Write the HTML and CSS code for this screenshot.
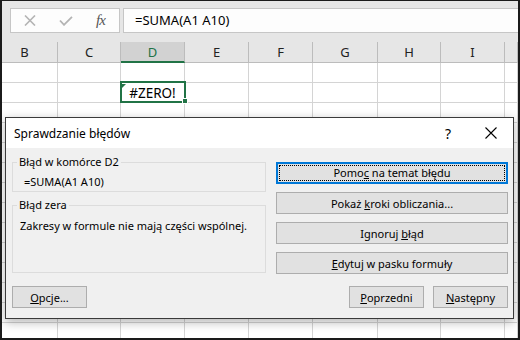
FILE: index.html
```html
<!DOCTYPE html>
<html lang="pl">
<head>
    <meta charset="UTF-8">
    <title>Sprawdzanie błędów</title>
    <link rel="stylesheet" href="styles.css">
</head>
<body>
<div class="app">
    <div class="formula-bar">
        <div class="tools">
            <svg class="ico-cancel" width="12" height="11" viewBox="0 0 12 11"><path d="M1 0.5 L11 10.5 M11 0.5 L1 10.5" stroke="#b4b4b4" stroke-width="1.6" fill="none"/></svg>
            <svg class="ico-enter" width="14" height="10" viewBox="0 0 14 10"><path d="M1 4.5 L5 8.8 L13 0.8" stroke="#b4b4b4" stroke-width="1.8" fill="none"/></svg>
            <span class="fx">fx</span>
        </div>
        <div class="formula-input">=SUMA(A1 A10)</div>
    </div>

    <table class="sheet">
        <colgroup>
            <col style="width:56px"><col style="width:63px"><col style="width:64px"><col style="width:64px">
            <col style="width:64px"><col style="width:65px"><col style="width:63px"><col style="width:64px"><col>
        </colgroup>
        <tr class="head">
            <th class="col-b">B</th><th>C</th><th class="active">D</th><th>E</th><th>F</th><th>G</th><th>H</th><th>I</th><th></th>
        </tr>
        <tr><td></td><td></td><td></td><td></td><td></td><td></td><td></td><td></td><td></td></tr>
        <tr><td></td><td></td><td class="selected"><span class="err-mark"></span>#ZERO!<span class="handle"></span></td><td></td><td></td><td></td><td></td><td></td><td></td></tr>
        <tr><td></td><td></td><td></td><td></td><td></td><td></td><td></td><td></td><td></td></tr>
        <tr><td></td><td></td><td></td><td></td><td></td><td></td><td></td><td></td><td></td></tr>
        <tr><td></td><td></td><td></td><td></td><td></td><td></td><td></td><td></td><td></td></tr>
        <tr><td></td><td></td><td></td><td></td><td></td><td></td><td></td><td></td><td></td></tr>
        <tr><td></td><td></td><td></td><td></td><td></td><td></td><td></td><td></td><td></td></tr>
        <tr><td></td><td></td><td></td><td></td><td></td><td></td><td></td><td></td><td></td></tr>
        <tr><td></td><td></td><td></td><td></td><td></td><td></td><td></td><td></td><td></td></tr>
        <tr><td></td><td></td><td></td><td></td><td></td><td></td><td></td><td></td><td></td></tr>
        <tr><td></td><td></td><td></td><td></td><td></td><td></td><td></td><td></td><td></td></tr>
        <tr><td></td><td></td><td></td><td></td><td></td><td></td><td></td><td></td><td></td></tr>
        <tr><td></td><td></td><td></td><td></td><td></td><td></td><td></td><td></td><td></td></tr>
        <tr><td></td><td></td><td></td><td></td><td></td><td></td><td></td><td></td><td></td></tr>
    </table>

    <div class="dialog">
        <div class="dlg-title">
            <span class="dlg-caption">Sprawdzanie błędów</span>
            <span class="dlg-help">?</span>
            <svg class="dlg-close" width="12" height="12" viewBox="0 0 12 12"><path d="M0.5 0.5 L11.5 11.5 M11.5 0.5 L0.5 11.5" stroke="#000" stroke-width="1.1" fill="none"/></svg>
        </div>
        <div class="dlg-body">
            <div class="dlg-main">
                <div class="dlg-left">
                    <fieldset class="group">
                        <legend>Błąd w komórce D2</legend>
                        <div class="group-formula">=SUMA(A1 A10)</div>
                    </fieldset>
                    <fieldset class="group group-desc">
                        <legend>Błąd zera</legend>
                        <div class="group-text">Zakresy w formule nie mają części wspólnej.</div>
                    </fieldset>
                </div>
                <div class="dlg-actions">
                    <button class="btn btn-wide focused"><span>Pomo<u>c</u> na temat błędu</span></button>
                    <button class="btn btn-wide">Pokaż <u>k</u>roki obliczania...</button>
                    <button class="btn btn-wide">Ignoruj <u>b</u>łąd</button>
                    <button class="btn btn-wide"><u>E</u>dytuj w pasku formuły</button>
                </div>
            </div>
            <div class="dlg-footer">
                <button class="btn"><u>O</u>pcje...</button>
                <div class="nav-btns">
                    <button class="btn"><u>P</u>oprzedni</button>
                    <button class="btn"><u>N</u>astępny</button>
                </div>
            </div>
        </div>
    </div>
</div>
</body>
</html>
```

FILE: styles.css
```css
* {
    box-sizing: border-box;
}

body {
    margin: 0;
    font-family: "Noto Sans", sans-serif;
}

.app {
    position: relative;
    width: 520px;
    height: 340px;
    overflow: hidden;
    background: #fff;
    border: 2px solid #1b1b1b;
    border-top-width: 1px;
}

/* formula bar */
.formula-bar {
    display: flex;
    gap: 3px;
    height: 41px;
    padding: 7px 0 0 8px;
    background: #e6e6e6;
}

.tools {
    display: flex;
    align-items: center;
    width: 110px;
    height: 25px;
    background: #fdfdfd;
    border: 1px solid #c6c6c6;
}

.ico-cancel {
    margin-left: 13px;
}

.ico-enter {
    margin-left: 23px;
}

.fx {
    margin-left: 23px;
    font-family: "Liberation Serif", serif;
    font-style: italic;
    font-size: 15px;
    color: #555;
    letter-spacing: -1px;
}

.formula-input {
    flex: 1;
    height: 25px;
    margin-right: -4px;
    padding-left: 11px;
    line-height: 23px;
    font-size: 13px;
    background: #fdfdfd;
    border: 1px solid #c6c6c6;
}

/* sheet */
.sheet {
    width: 516px;
    table-layout: fixed;
    border-collapse: separate;
    border-spacing: 0;
}

.sheet th {
    height: 21px;
    padding: 0;
    font-weight: normal;
    font-size: 13px;
    color: #222;
    background: #e6e6e6;
    border-right: 1px solid #bcbcbc;
    border-bottom: 1px solid #bcbcbc;
}

.sheet th.col-b {
    padding-right: 10px;
}

.sheet th.active {
    background: #d2d2d2;
    color: #217346;
    border-bottom: 2px solid #217346;
}

.sheet td {
    height: 20px;
    padding: 0;
    border-right: 1px solid #d4d4d4;
    border-bottom: 1px solid #d4d4d4;
}

.sheet td.selected {
    position: relative;
    text-align: center;
    font-size: 13.5px;
    line-height: 18px;
}

.selected::after {
    content: "";
    position: absolute;
    top: -2px;
    left: -1px;
    right: -2px;
    bottom: -1px;
    border: 2px solid #217346;
}

.err-mark {
    position: absolute;
    top: 1px;
    left: 1px;
    border-top: 4px solid #217346;
    border-right: 4px solid transparent;
}

.handle {
    position: absolute;
    right: -4px;
    bottom: -2px;
    z-index: 1;
    width: 6px;
    height: 6px;
    background: #217346;
    border: 1px solid #fff;
}

/* dialog */
.dialog {
    position: absolute;
    top: 116px;
    left: 3px;
    width: 509px;
    height: 202px;
    background: #f0f0f0;
    border: 1px solid #3a3a3a;
    box-shadow: 0 3px 10px rgba(0, 0, 0, 0.3);
    font-size: 11px;
    color: #000;
}

.dlg-title {
    display: flex;
    align-items: center;
    height: 30px;
    padding: 0 16px 0 8px;
    background: #fff;
}

.dlg-caption {
    flex: 1;
    font-size: 12px;
}

.dlg-help {
    margin-right: 34px;
    font-size: 14px;
}

.dlg-body {
    height: 169px;
    padding: 6px 5px 0 6px;
}

.dlg-main {
    display: flex;
    gap: 10px;
}

.dlg-left {
    width: 254px;
}

.group {
    margin: 0;
    padding: 4px 0 1px 11px;
    border: 1px solid #dcdcdc;
}

.group legend {
    margin-left: -7px;
    padding: 0 2px;
    line-height: 16px;
}

.group-formula,
.group-text {
    line-height: 16px;
}

.group-desc {
    height: 76px;
    margin-top: 5px;
    padding: 5px 0 0 7px;
}

.group-desc legend {
    margin-left: -3px;
}

.dlg-actions {
    display: flex;
    flex-direction: column;
    gap: 8px;
    width: 232px;
    padding-top: 8px;
}

.btn {
    height: 22px;
    width: 75px;
    padding: 0;
    font-family: "Noto Sans", sans-serif;
    font-size: 11px;
    color: #000;
    background: #e1e1e1;
    border: 1px solid #adadad;
}

.btn-wide {
    width: 232px;
}

.btn.focused {
    padding: 1px;
    border: 2px solid #0078d7;
}

.btn.focused span {
    display: block;
    height: 100%;
    line-height: 14px;
    border: 1px dotted #000;
}

.dlg-footer {
    display: flex;
    justify-content: space-between;
    margin-top: 12px;
}

.nav-btns {
    display: flex;
    gap: 9px;
}
```
